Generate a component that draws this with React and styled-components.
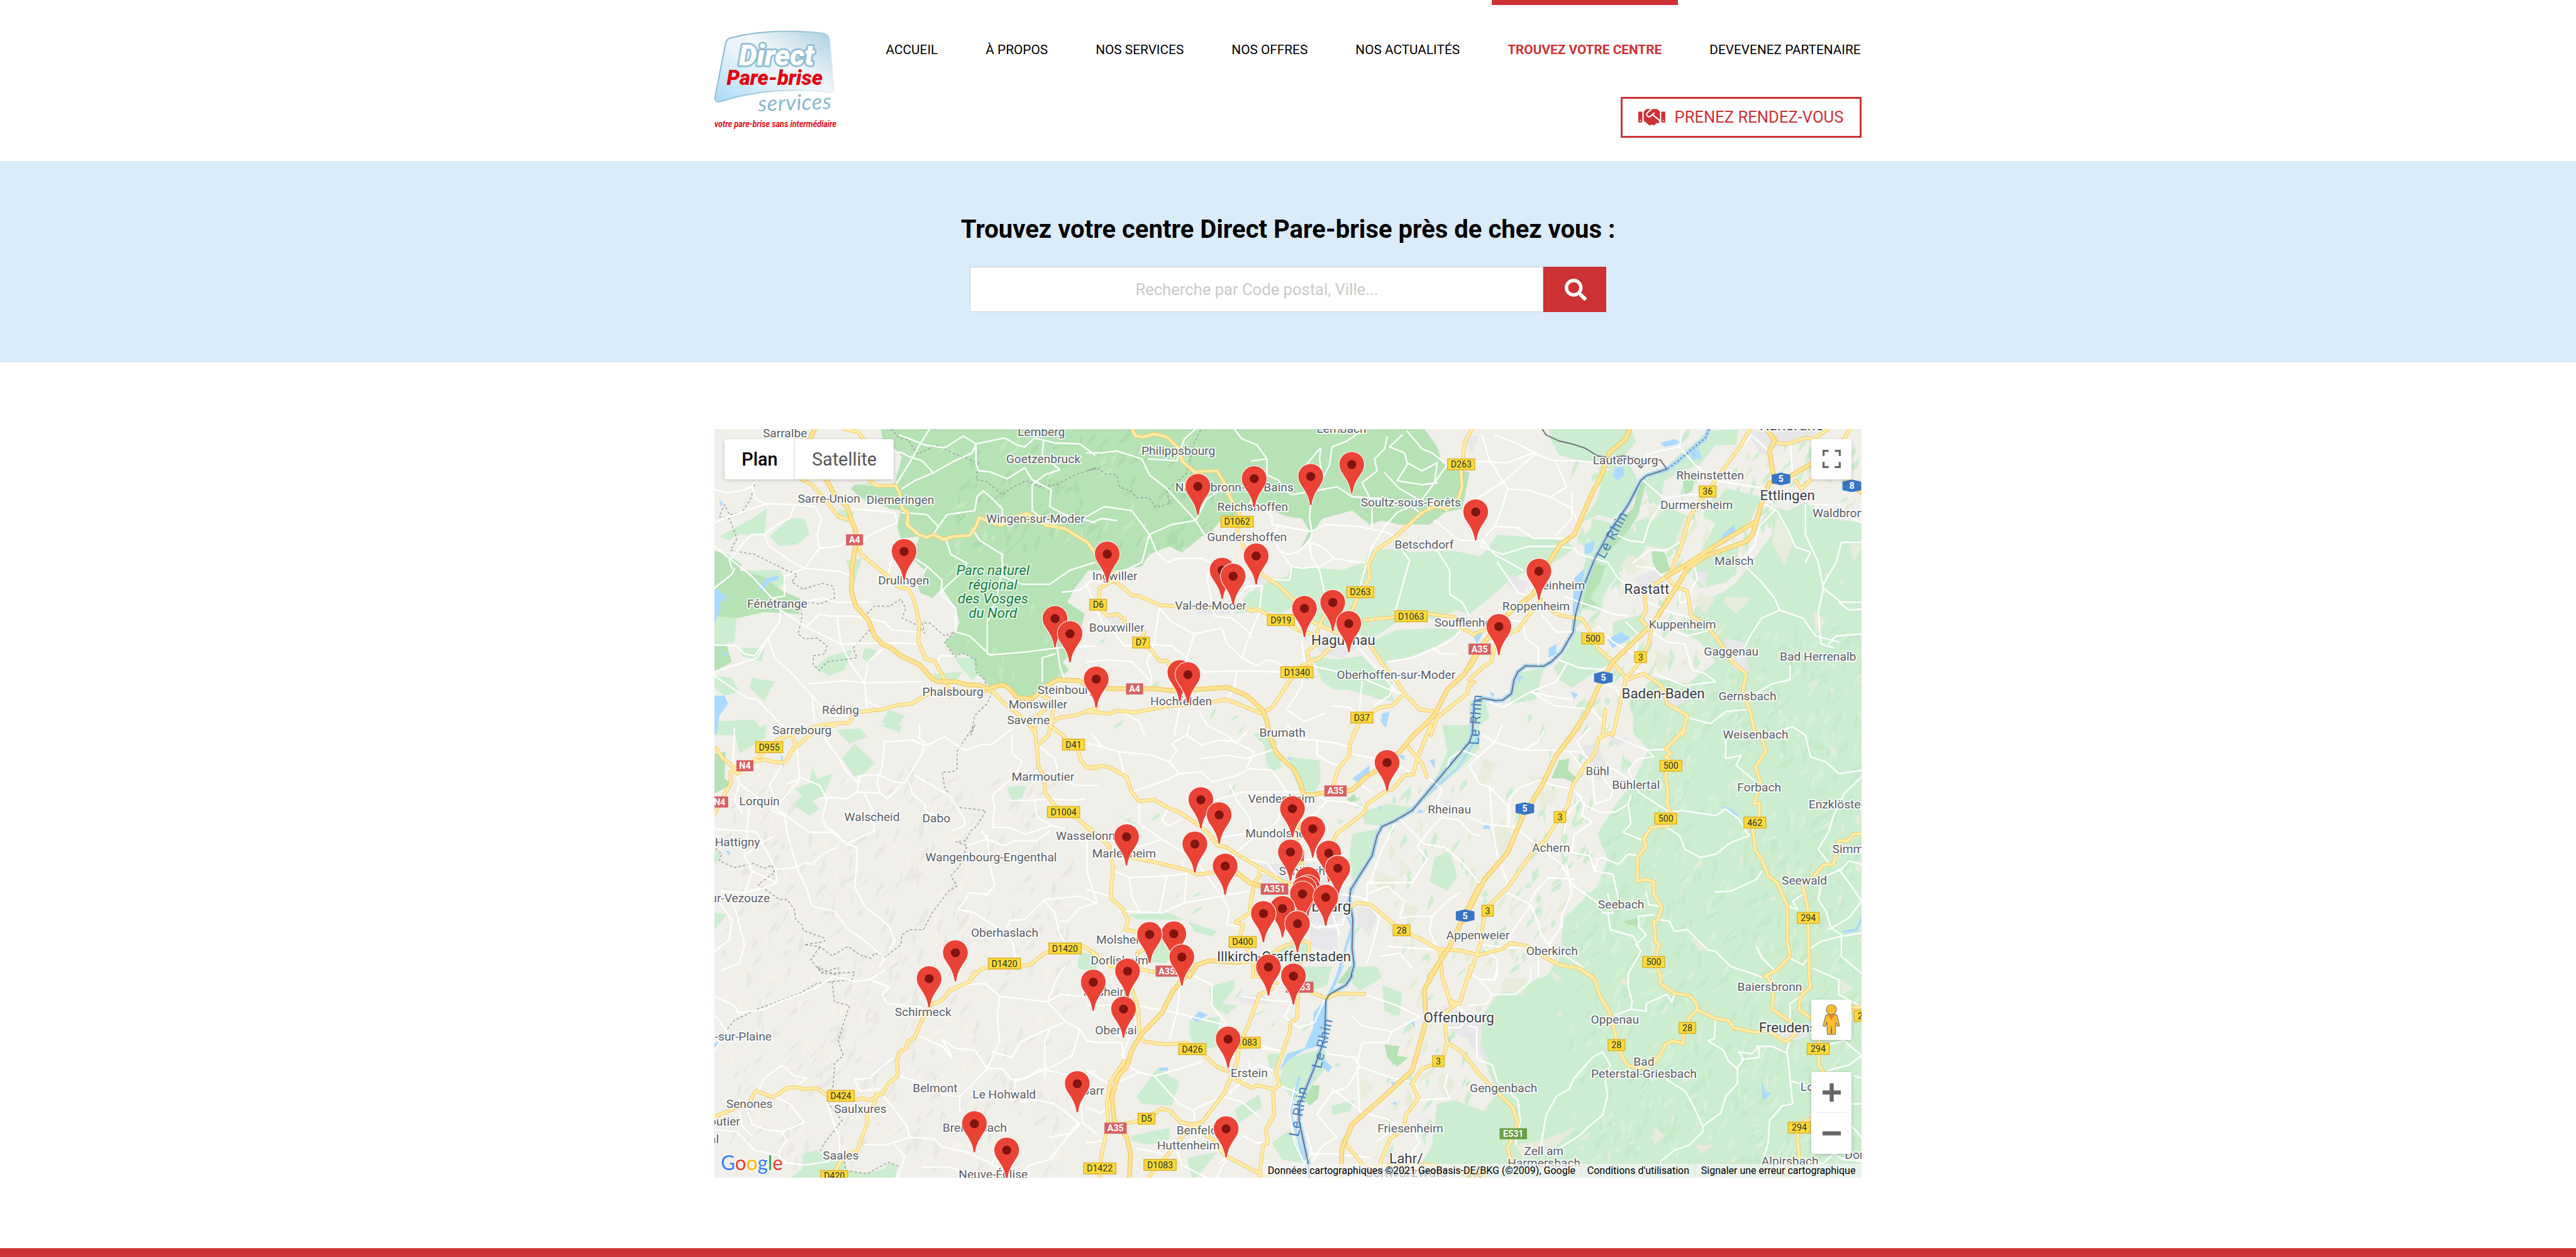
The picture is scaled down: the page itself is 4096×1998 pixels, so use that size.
import React from "react";
import styled, { createGlobalStyle, css } from "styled-components";
import { FaHandshake, FaSearch } from "react-icons/fa";

const RED = "#cc3234";

const GlobalStyle = createGlobalStyle`
  *, *::before, *::after { box-sizing: border-box; }
  body {
    margin: 0;
    background: #fff;
    font-family: Roboto, "Liberation Sans", sans-serif;
    color: #000;
  }
`;

/* ------------------------------ page shell ------------------------------ */

const Page = styled.div`
  width: 4096px;
  height: 1998px;
  overflow: hidden;
  display: flex;
  flex-direction: column;
`;

const Container = styled.div`
  width: 1824px;
  margin: 0 auto;
`;

const Header = styled.header`
  height: 256px;
  flex: none;
`;

const HeaderRow = styled(Container)`
  display: flex;
  justify-content: space-between;
  align-items: flex-start;
`;

const LogoSvg = styled.svg`
  display: block;
  width: 194px;
  height: 156px;
  margin-top: 49px;
  overflow: visible;
`;

const HeaderRight = styled.div`
  display: flex;
  flex-direction: column;
  align-items: flex-end;
`;

const Nav = styled.nav`
  display: flex;
  gap: 25.3px;
  margin-right: -24px;
`;

const NavItem = styled.a`
  height: 153.6px;
  padding: 58px 25.4px 0;
  border-top: 8px solid ${(p) => (p.$active ? RED : "transparent")};
  font-size: 20.8px;
  line-height: 26px;
  font-weight: ${(p) => (p.$active ? 700 : 400)};
  color: ${(p) => (p.$active ? RED : "#000")};
  white-space: nowrap;
`;

const RdvButton = styled.a`
  display: flex;
  align-items: center;
  gap: 14.4px;
  height: 65.6px;
  padding: 0 25.6px;
  border: 3.2px solid ${RED};
  color: ${RED};
  font-size: 25.6px;
  white-space: nowrap;
  svg { width: 42.9px; height: 34.3px; }
`;

const Hero = styled.section`
  height: 320px;
  flex: none;
  background: #daebf9;
  display: flex;
  flex-direction: column;
  align-items: center;
  padding-top: 83px;
`;

const HeroTitle = styled.h1`
  margin: 0 0 33px;
  font-size: 40px;
  line-height: 52px;
  height: 52px;
  font-weight: 700;
  white-space: nowrap;
`;

const SearchForm = styled.div`
  display: flex;
  height: 72px;
  width: 1011.2px;
`;

const SearchInput = styled.input`
  flex: 1;
  height: 72px;
  min-width: 0;
  border: 1.6px solid #ccc;
  background: #fff;
  text-align: center;
  font: 400 25.6px Roboto, "Liberation Sans", sans-serif;
  padding: 0;
  border-radius: 0;
  &::placeholder { color: #c9c9c9; opacity: 1; }
`;

const SearchButton = styled.button`
  width: 99.2px;
  height: 72px;
  border: 0;
  padding: 0;
  background: ${RED};
  color: #fff;
  display: flex;
  align-items: center;
  justify-content: center;
  svg { width: 35px; height: 35px; margin-left: 2px; }
`;

const MapFrame = styled.div`
  position: relative;
  width: 1824px;
  height: 1190.4px;
  flex: none;
  margin: 105.6px auto 0;
  overflow: hidden;
  background: #f0efea;
`;

const FooterBar = styled.footer`
  margin-top: auto;
  height: 14px;
  flex: none;
  background: ${RED};
`;

/* ----------------------------- map overlays ----------------------------- */

const MapSvg = styled.svg`
  display: block;
  width: 1824px;
  height: 1190.4px;
`;

const controlSurface = css`
  background: #fff;
  border-radius: 3.2px;
  box-shadow: 0 1.6px 6.4px -1.6px rgba(0, 0, 0, 0.3);
`;

const MapTypes = styled.div`
  ${controlSurface}
  position: absolute;
  left: 16px;
  top: 16px;
  height: 64px;
  display: flex;
`;

const MapType = styled.div`
  width: ${(p) => p.$width}px;
  display: flex;
  align-items: center;
  justify-content: center;
  padding-top: 1px;
  font-size: 28.8px;
  font-weight: ${(p) => (p.$active ? 500 : 400)};
  color: ${(p) => (p.$active ? "#000" : "#565656")};
  & + & { box-shadow: -2px 0 3px -1px rgba(0, 0, 0, 0.16); }
`;

const FullscreenButton = styled.div`
  ${controlSurface}
  position: absolute;
  right: 16px;
  top: 16px;
  width: 64px;
  height: 64px;
  display: grid;
  place-items: center;
`;

const ControlColumn = styled.div`
  position: absolute;
  right: 16px;
  bottom: 38.4px;
  display: flex;
  flex-direction: column;
  gap: 51.2px;
`;

const ControlBox = styled.div`
  ${controlSurface}
  width: 64px;
  height: ${(p) => p.$height}px;
  display: flex;
  flex-direction: column;
  align-items: center;
  justify-content: center;
`;

const ZoomCell = styled.div`
  width: 48px;
  flex: 1;
  display: grid;
  place-items: center;
  & + & { border-top: 1.6px solid #e6e6e6; }
`;

const GoogleLogo = styled.svg`
  position: absolute;
  left: 8px;
  bottom: 0;
  width: 110px;
  height: 46px;
`;

const Credits = styled.div`
  position: absolute;
  right: 0;
  bottom: 0;
  display: flex;
  gap: 1.6px;
  height: 22.4px;
`;

const Credit = styled.span`
  display: flex;
  align-items: center;
  padding: 0 ${(p) => p.$end || 8.6}px 0 8.6px;
  font-size: 16px;
  background: rgba(245, 245, 245, 0.72);
  white-space: nowrap;
`;

const Place = styled.text`
  font-family: Roboto, "Liberation Sans", sans-serif;
  font-size: ${(p) => p.$size}px;
  fill: ${(p) => p.$color};
  text-anchor: middle;
  paint-order: stroke;
  stroke: ${(p) => p.$halo};
  stroke-width: 5px;
  stroke-linejoin: round;
  ${(p) => p.$italic && "font-style: italic;"}
  ${(p) => p.$spacing && `letter-spacing: ${p.$spacing}px;`}
`;

const ShieldText = styled.text`
  font-family: Roboto, "Liberation Sans", sans-serif;
  font-size: 17.8px;
  text-anchor: middle;
  fill: ${(p) => (p.$light ? "#fff" : "#29302f")};
  font-weight: ${(p) => (p.$light ? 700 : 400)};
`;

/* ------------------------------- map data ------------------------------- */

/* Each sheet has its own origin and scale; all geometry is given per sheet. */
const SHEETS = {
  A: [1400, 840, 2.0103, 2.529],
  B: [2160, 840, 2.0103, 2.529],
  C: [2920, 840, 1.96, 2.529],
  D: [1400, 1440, 2.0103, 3],
  E: [2160, 1440, 2.0103, 3],
  F: [2920, 1440, 1.96, 3],
  J: [1400, 1920, 2.0103, 2.7128],
  K: [2160, 1920, 2.0103, 2.7128],
  L: [2920, 1920, 1.96, 2.7128],
};

const at = (sheet, u, v) => {
  const [x, y, sx, sy] = SHEETS[sheet];
  return [x + u / sx, y + v / sy];
};

const points = (str) => {
  let sheet = "A";
  const out = [];
  str.trim().split(/\s+/).forEach((t) => {
    if (SHEETS[t]) sheet = t;
    else {
      const [u, v] = t.split(",").map(Number);
      out.push(at(sheet, u, v));
    }
  });
  return out;
};

const line = (str) => "M" + points(str).map((p) => p.map((n) => n.toFixed(1)).join(" ")).join("L");
const area = (str) => line(str) + "Z";
const join = (list, fn) => list.map(fn).join("");

const VOSGES = [
  "A 705,30 712,80 760,130 790,170 760,300 690,320 600,310 585,330 620,370 670,390 740,430 785,440 770,520 785,580 860,570 830,680 880,740 850,790 860,850 910,880 950,830 1000,920 1020,1000 1005,1050 960,1100 1000,1170 1030,1155 1075,1180 1090,1250 1140,1325 1190,1310 1215,1330 1250,1390 1310,1390 1360,1330 1420,1290 1455,1240 1430,1200 1480,1150 1440,1080 1500,1050 1520,960 1450,900 1480,830 1540,730 B 0,740 130,740 220,720 250,660 330,620 380,650 460,570 500,540 530,500 620,450 660,380 720,430 800,470 860,480 890,540 850,640 900,560 940,480 1060,440 1130,510 1180,490 1250,510 1370,510 1430,450 1500,430 1530,250 1420,200 1400,120 1350,30",
  "A 40,640 90,660 150,710 140,740 230,770 320,850 380,880 380,960 240,950 130,980 40,970",
  "A 40,1120 90,1120 110,1200 40,1250",
  "D 40,170 85,160 80,320 110,350 40,410",
  "C 490,700 530,720 510,800 470,880 500,910 440,930 450,850",
  "C 590,480 640,430 660,300 690,280 660,460 610,560 540,650 500,660 560,540",
  "C 710,640 760,650 785,740 740,760 715,700",
  "C 830,270 880,260 870,340 840,360",
  "F 350,210 390,200 385,270 415,310 410,345 365,315 320,320",
  "F 600,1170 655,1150 660,1200 620,1190",
  "K 1190,420 1250,430 1240,480 1285,490 1240,540 1200,490",
  "K 900,640 930,640 925,710 890,750 865,710",
  "K 1000,90 1050,0 1070,0 1050,90",
  "E 1040,440 1070,410 1080,450 1050,460",
];

const GREEN = [
  "B 640,860 730,790 800,770 820,720 930,730 1020,740 1110,700 1130,640 1260,630 1290,650 1460,640 1568,670 C 60,650 110,560 200,570 380,590 410,630 330,700 200,760 150,800 60,900 0,960 B 1480,940 1400,980 1240,1000 1130,1090 1070,1050 1000,1060 900,1010 850,900 780,960 690,940 590,960",
  "B 900,1170 1000,1190 1100,1170 1190,1290 1240,1310 1130,1370 1040,1340 990,1340 940,1300",
  "B 1130,1100 1240,1040 1400,1030 1500,1040 1400,1120 1280,1180 1190,1210",
  "B 1130,1270 1200,1300 1230,1400 1140,1380",
  "C 310,30 630,30 650,90 560,240 500,200 430,190 350,160 320,90",
  "C 520,250 620,200 660,290 620,400 560,480 500,460 440,500 500,380",
  "C 480,480 620,520 700,600 650,700 600,720 540,830 500,940 440,940 420,1020 440,780",
  "C 690,270 770,235 860,120 930,40 1050,30 1040,110 960,110 900,210 830,240 760,290 740,420 700,380 680,320",
  "C 1100,360 1140,370 1080,540 960,620 900,640 960,510 920,470 1000,330",
  "C 640,500 780,430 860,470 820,640 700,620 660,560",
  "C 880,690 960,640 1050,620 1040,760 1000,800 900,830 870,780",
  "C 560,1000 680,960 700,1040 620,1080 640,1120 560,1080",
  "C 410,1040 470,1060 520,1160 560,1200 480,1260 400,1330 350,1290 330,1230 390,1120",
  "C 180,1260 290,1230 260,1390 160,1410",
  "C 0,1400 60,1390 80,1480 20,1540 0,1568",
  "C 1180,420 1240,440 1310,400 1400,480 1529,500 1529,1568 F 1529,0 1529,1500 L 1529,0 1529,1138 230,1138 K 1330,1138 1330,1080 1380,960 1400,740 1470,720 L 60,780 110,680 40,440 60,250 110,150 300,50 F 350,1400 370,1150 500,960 540,800 500,650 560,500 640,330 700,150 640,50 C 640,1480 620,1400 720,1280 850,1310 960,1200 900,1100 820,1040 900,900 990,850 1040,800 1090,720 1180,560",
  "A 340,480 400,480 420,560 370,610 300,620 260,570",
  "A 190,480 250,430 240,560 130,560 100,590 60,570",
  "A 600,310 680,300 650,400 610,360",
  "A 540,430 600,450 570,500 530,480",
  "A 565,690 630,680 600,800 580,740",
  "A 40,760 180,740 300,740 330,800 250,860 120,850 40,830",
  "A 40,970 130,960 120,1100 40,1120",
  "A 40,1270 110,1280 140,1350 80,1370 40,1330",
  "A 140,1130 240,1130 230,1200 150,1170",
  "A 190,1280 280,1300 240,1400 180,1330",
  "A 500,1170 590,1140 560,1240 500,1270 440,1230",
  "A 640,1130 690,1140 660,1210 630,1180",
  "A 735,1440 800,1470 760,1545 710,1500",
  "A 910,1260 1030,1250 1000,1310 940,1300",
  "A 1000,1180 1075,1180 1100,1260 1070,1290 1020,1220",
  "A 40,1500 200,1490 240,1568 40,1568",
  "D 120,40 250,0 240,80 140,170",
  "D 430,250 450,320 510,290 480,420 430,450 460,500 420,540 360,480 390,420 360,380 420,350",
  "D 550,200 600,110 680,225 640,290 600,305",
  "D 525,30 620,20 650,70 580,110",
  "D 700,0 790,0 780,45",
  "D 1210,370 1290,360 1270,430 1230,455",
  "D 40,1120 90,1130 40,1220",
  "D 40,740 70,780 40,830",
  "E 660,50 720,50 760,100 780,250 740,280 720,230 710,120",
  "E 810,190 930,210 935,330 910,400 850,390 820,280",
  "E 1420,0 1568,0 1568,140 1500,250 1400,380 1350,450 1290,520 1400,300 1440,160",
  "E 1060,650 1160,620 1140,780 1090,880 1060,930 1050,780",
  "E 1000,560 1030,570 1010,590",
  "E 1100,520 1200,470 1300,490 1230,570 1180,600 1110,590",
  "E 1390,790 1450,750 1480,900 1440,990 1370,930",
  "E 130,540 220,600 170,580",
  "E 165,1130 330,1120 420,1180 520,1230 500,1260 430,1230 400,1160 200,1160",
  "E 290,1260 360,1300 320,1420 200,1410 250,1360",
  "E 830,1280 880,1290 890,1400 850,1430 720,1400",
  "D 1500,1350 1568,1380 1568,1470 1490,1450",
  "K 490,110 590,70 590,120 540,200 600,210 560,260 500,220",
  "K 410,290 530,270 520,430 440,460 410,370",
  "K 280,550 370,620 340,750 220,740 200,700",
  "K 180,910 330,870 330,930 250,960 180,940",
  "K 590,770 690,690 700,760 610,840",
  "K 720,470 780,470 760,560 730,540",
  "K 790,500 950,440 960,540 900,640 870,680 850,760 770,620",
  "K 860,0 980,0 960,100 900,130 870,90",
  "K 740,950 810,880 860,1000 870,1060 780,1040",
  "K 1180,100 1260,140 1250,270 1190,240",
  "K 1070,0 1160,0 1180,60 1090,130 1060,90",
  "K 980,750 1070,720 1050,780 980,800",
  "J 395,1010 450,990 500,1050 560,1050 570,1100 640,1115 720,1090 735,1060 775,1075 760,1138 345,1138 390,1090",
  "K 400,1030 520,1000 440,1138 420,1138",
];

const BEIGE = [
  "C 840,470 900,500 830,620 800,600", "C 700,420 760,400 740,470 700,500", "C 1200,460 1260,600 1230,720 1180,600",
  "C 900,850 960,880 920,960 880,900", "C 1000,870 1100,880 1040,960 990,900", "C 720,1140 790,1180 740,1260",
  "C 1340,940 1390,1000 1350,1060", "C 1480,600 1529,620 1500,700", "C 620,660 700,700 640,760 590,720",
  "F 280,400 350,380 330,460 270,500", "F 60,200 110,230 60,370 30,330", "F 230,300 310,320 250,350",
  "F 130,560 180,700 120,780 80,650", "F 900,780 910,830 870,870", "F 1400,120 1435,140 1420,180",
  "F 1500,850 1529,830 1520,880", "F 860,1260 930,1330 900,1350", "F 1120,1320 1180,1450 1130,1370",
  "E 1160,870 1240,920 1210,1000 1150,950", "E 1260,1060 1330,1090 1290,1200", "E 1250,800 1290,850 1260,900",
  "K 1090,600 1150,640 1100,720", "K 1420,560 1470,620 1440,720 1400,640", "K 1180,800 1230,820 1200,900",
  "L 140,60 230,60 210,160 120,130", "L 320,20 370,70 330,70", "L 580,100 600,60 620,90", "L 720,860 760,910 720,970", "L 1440,60 1500,120 1450,150",
  "L 180,960 300,930 420,860 330,980 210,1040", "L 880,960 960,960 900,1010",
];

const URBAN = [
  "C 1080,50 1180,30 1360,40 1300,100 1200,120 1140,160", "C 640,780 720,740 780,780 740,850 660,820", "C 870,760 930,740 920,830",
  "C 990,1080 1070,1100 1090,1250 1030,1240", "C 730,1340 860,1380 790,1440 740,1380", "C 850,960 910,1000 880,1050",
  "F 430,130 500,110 550,300 500,330 460,240", "F 540,60 620,80 580,130", "E 870,820 1000,860 1050,1100 980,1200 900,1180 850,1030 700,1020 700,830",
  "E 890,1190 1000,1220 1000,1350 900,1320", "E 1080,1090 1170,1100 1130,1260 1080,1180", "E 1420,450 1460,440 1440,490",
  "B 1080,1130 1020,1180 930,1150 900,1100 960,1060 1080,1080", "B 380,910 640,900 560,960 450,960", "B 640,780 720,770 700,860", "B 70,970 140,980 120,1040",
  "K 600,160 700,150 740,200 620,200", "K 1420,210 1530,260 1568,400 1500,380 1440,330", "L 0,290 50,290 40,400 80,520 0,420", "L 1170,350 1250,320 1330,370 1260,400",
  "B 1500,70 1568,60 1540,150", "C 150,760 230,800 210,860 150,820",
];

const WATER = [
  "A 40,830 60,840 90,880 60,900 65,940 40,1010", "A 215,830 250,780 300,765 295,785 260,800 230,845", "A 40,1370 80,1370 95,1410 60,1470 50,1560 40,1568",
  "A 60,390 75,400 65,420", "A 75,1155 95,1155 80,1175", "D 85,750 103,750 100,780", "D 305,180 312,180 318,245 310,248",
  "J 40,415 58,405 50,440 40,448", "C 570,220 600,225 605,260 580,290 560,270", "C 860,140 895,130 905,180 870,185",
  "C 745,100 800,80 825,100 800,110 760,120", "C 450,610 490,590 480,650 450,660", "C 410,780 450,730 430,880 400,1010",
  "C 540,1090 590,1050 630,1080 590,1110 560,1130", "C 310,1130 340,1110 340,1160 310,1180", "C 980,570 1030,510 1040,550 1000,590",
  "C 190,1270 210,1270 190,1310", "C 80,1350 100,1360 90,1380", "C 395,1350 425,1360 410,1390", "C 10,1050 60,1040 30,1110",
  "B 1180,1460 1210,1450 1195,1530 1175,1500", "E 1060,320 1130,240 1130,290 1080,340", "E 1370,210 1390,200 1390,260", "E 1240,180 1270,180 1270,210",
  "E 800,195 815,190 815,220", "E 1330,500 1350,520 1320,525", "E 1165,480 1180,490 1175,510",
  "K 905,250 950,180 950,330 920,430 870,450 810,500 770,560 800,470 870,440 905,330", "K 940,490 980,540 965,570 935,530", "K 1215,620 1250,625 1220,640",
  "K 420,280 450,240 485,260 440,300", "K 288,545 325,545 322,562 290,562", "K 1290,290 1310,300 1310,330", "K 1220,730 1240,730 1230,750",
  "F 980,490 1000,488 1030,510 1050,540 1030,550 1015,515", "F 55,600 80,590 80,620 55,620", "L 1138,610 1155,680 1180,678 1160,705 1145,722", "K 1440,370 1455,390 1450,420",
];

const MOTORWAYS = [
  "A 440,30 415,100 485,280 520,360 570,420 585,480 605,540 605,610 590,720 588,850 605,920 655,990 680,1070 710,1110 745,1130 785,1170 860,1215 910,1285 935,1300 1005,1300 1050,1315 1100,1318 1130,1335 1190,1315 1215,1330 1250,1380 1310,1385 1370,1320 1410,1290 1500,1295 B 0,1320 100,1335 270,1335 340,1345 430,1340 560,1328 640,1370 705,1445 720,1500 E 722,0 735,80 760,170 830,270 858,360 865,415 910,415 960,400 1055,390 1090,350 1110,315 1160,270 1250,160 1300,70 1350,0 B 1390,1465 1440,1340 1510,1260 1568,1130 C 0,1230 60,1100 150,960 250,860 310,700 355,610 410,560 450,440 480,350 520,250 545,150 610,80 625,30",
  "C 1340,200 1240,275 1170,300 1140,400 1105,560 1080,595 920,670 850,730 810,820 720,1000 690,1040 560,1200 510,1310 460,1450 400,1568 F 430,0 340,180 280,370 210,540 150,760 60,920 0,1100 E 1568,960 1510,1130 1450,1320 1370,1500 K 1400,0 1350,120 1355,300 1300,560 1180,710 1060,850 1020,980 1015,1138",
  "C 1110,500 980,600 860,700 770,770",
  "E 610,1415 490,1405 440,1430 410,1500 K 410,30 345,130 300,250 215,370 180,450 160,540 125,590 100,700 110,830 160,920 175,1010 170,1138",
  "E 600,880 650,940 700,960", "E 865,415 845,560 835,700 870,900", "C 1165,40 1190,90 1170,140 1185,260", "C 1470,290 1529,350",
];

const MAINROADS = [
  "A 385,280 430,310 485,390 535,470 590,490 625,660 670,705 735,770 770,820 815,835 835,880 858,1000 855,1100 885,1185 920,1195 965,1300 990,1370",
  "A 560,30 615,45 640,90 660,290 690,315 765,315 780,350 790,430 815,450 810,510 855,560 890,575 915,560 955,585 995,570 1060,565 1085,520 1098,475 1130,490 1185,515 1230,480 1290,455 1370,515 1440,530 1530,600 1560,650 B 30,650 110,760 110,790",
  "B 110,790 50,830 50,930 85,970 120,960 150,985 152,1010", "B 230,1050 220,1090 255,1135 290,1195 320,1195 340,1240 350,1330",
  "B 110,790 180,865 210,870 290,915 400,925 640,930 660,945 680,935 720,960 790,1000 850,1045 900,1060",
  "B 180,30 195,65 225,70 270,55 320,70 370,130 380,190 430,245 520,240 545,290 575,380 610,460 600,540 630,630 700,760 770,820 850,920 905,1000 990,1050 1040,1070 1130,1110 1180,1210 1240,1300 1270,1360 1330,1440 1390,1450",
  "B 1540,30 1510,100 1495,250 1500,320 1480,400 1390,420 1340,450 1230,575 1155,640 1125,710 1130,780 1090,860 1060,940 1060,990",
  "B 950,960 920,1050 920,1110 880,1150 895,1220 820,1280 740,1430 705,1455", "B 1110,990 1230,975 1370,960 1470,975 1500,1030 1550,1065 C 20,1060 60,1040", "B 990,1110 930,1180 860,1220", "B 1390,420 1440,430 1480,400",
  "B 0,1450 90,1460 120,1445 190,1455 310,1425 450,1410 560,1390 600,1410 700,1460", "B 1270,1360 1220,1420 1170,1430 1090,1500 1065,1568 E 1085,0 1050,120 1050,180 1005,260 985,360",
  "C 20,1300 0,1320 B 1530,1310 1520,1360 1400,1480 1375,1568 E 1375,0 1320,200 1305,295 1270,300 1220,385 1200,390 1120,470 1110,520 1050,590 1000,645 985,690",
  "C 0,1290 60,1220 85,1200 110,1080 190,1040 230,970 280,890", "E 1280,125 1340,230 1360,310",
  "D 290,90 350,50 A 480,1515 580,1505 600,1455 720,1437 770,1418 830,1410 880,1370 940,1345 1150,1345 1190,1400 1240,1450 1290,1500 1325,1568 D 1320,0 1328,130 1335,250 1360,310 1360,400 1400,480 1440,520 1490,560 1568,650 E 0,610 90,720 105,850 95,1030 140,1090 165,1160 155,1220 230,1240",
  "D 45,135 75,200 125,260 105,280 105,350 70,440 40,530", "D 520,0 430,50 350,150 325,220 290,225 240,205 190,220 130,290 120,260", "D 190,220 310,80 350,50 365,130",
  "A 1380,1510 1420,1480 1480,1470 1568,1430", "A 1400,1400 1375,1568 D 1360,80 1328,130", "A 1310,1490 1400,1400 1350,1370",
  "D 1380,0 1430,60 1490,140 1505,210 1525,250 1568,258 E 0,255 65,245 95,255 160,310 180,400 210,455 270,445 320,490 375,525 450,600 490,650 520,715 560,730 600,770 690,850 780,930 850,970",
  "E 180,790 250,810 390,860 440,890 510,880 600,890", "E 690,860 690,900 670,940 655,1060 650,1120 595,1175 625,1195 605,1290 640,1330 665,1400 665,1500 K 680,50 760,90",
  "D 1568,1370 1510,1315 1440,1320 1360,1360 1300,1430 1200,1440 1110,1450 1075,1500 J 1080,30 1060,80 1020,105 980,130 950,180 905,205 865,300 840,385 815,400 805,440 780,460 770,500 772,590 735,630 710,690 685,690 680,740 650,790 650,850 640,880 610,1000 590,1000 545,1050 525,1100",
  "J 40,810 110,770 180,730 205,670 275,705 330,655 375,650 395,662 450,655 490,695 600,718 630,710 660,720 690,700",
  "E 0,1330 50,1390 100,1440 160,1440 260,1470 400,1480", "E 240,1330 200,1360 210,1440",
  "K 150,510 95,620 80,730 85,840 70,950 55,1040 50,1138", "K 180,120 205,220 210,370", "K 210,370 230,405 320,420 400,410 480,490 520,540 565,565",
  "K 580,600 660,655 680,640 745,660 770,640 755,570 790,430 810,360 815,300 840,280 845,120", "K 245,1138 320,1020 420,850 460,840 550,680 600,520 610,420 645,320 690,150 740,120",
  "K 140,850 230,825 300,765 335,780 375,840 420,850 500,930 555,1020 690,1115 740,1138", "K 745,660 748,800 715,880 725,950 705,960 690,1138",
  "E 850,1280 890,1300 885,1370 850,1420 845,1500 K 845,120", "E 820,1300 760,1340 740,1370 720,1400 610,1415", "K 900,140 960,170 1000,145 1110,147",
  "E 1060,1080 1080,1060 1130,1068 1170,1115 1220,1180 1280,1240 1340,1280 1400,1335 1490,1345 1568,1370 F 40,1370 130,1335 160,1300 220,1315 290,1380 350,1430 430,1450 480,1500 L 430,12 490,70 510,160 545,240 565,340 575,400 595,480 615,530 660,550 720,520 750,460 765,420 790,400 835,415 835,370 850,330 855,280 890,230",
  "F 745,1480 L 745,90 800,145 860,155 885,200 890,235 960,280 1010,290 1030,330 1115,355 1160,345 1235,405 1275,360",
  "C 1095,30 1060,110 930,340 860,470 820,640 780,760 720,815", "C 685,850 685,900 690,940 670,990 710,1040 700,1110 665,1200 610,1285 590,1400 560,1568 F 545,50 505,80 490,170 450,240 400,370 385,480 340,580 300,680 250,750 150,970 60,1100 45,1300 0,1500",
  "E 1410,1340 1420,1500 K 1450,180 1480,200 1430,250 1430,300 1440,410 1500,460 1568,580 L 90,650 170,760 190,840 165,930 150,980 165,1050", "K 1535,0 1490,200 1450,200",
  "K 1440,410 1420,510 1340,550 1300,630 1325,710 1275,800 1265,880 1210,930 1175,1050 1170,1090", "K 1025,940 1110,1080 1300,1060 1380,1070 L 60,1138",
  "C 770,770 800,820 850,845 865,970 910,1000 970,1090 1025,1200 1080,1260 1065,1350 1095,1450 1110,1540 F 1145,90 1155,160 1115,250 1135,340 1110,470 1130,465 1130,550 1105,620 1115,750 1140,800 1165,900 1200,940 1240,1080 1240,1290 1250,1380 1200,1460 1150,1500 L 1165,60 1185,130 1180,230 1250,295 1270,330",
  "C 1195,75 1195,100 1240,105 1310,75 1340,80", "C 1340,80 1400,30", "C 1460,80 1485,30",
  "C 320,940 350,965 440,985 465,1030 500,1130 560,1200 615,1290 680,1260 750,1320 770,1410 850,1470 830,1568 F 840,20 800,90 765,140 785,170 765,190 785,210 765,300 775,410 770,460 785,520 780,600 710,610 680,680 690,720 655,790 655,930 690,920 720,935 720,1010 750,1085 735,1160 720,1170 725,1290 740,1310 725,1400 745,1500",
  "F 1529,650 1500,650 1475,690 1440,690 1420,830 1380,835 1330,920 1300,960 1320,1100 1325,1500 L 1330,110 1290,160 1285,230 1333,280", "L 1362,390 1362,530 1380,570", "L 1333,820 1290,845 1280,920 1285,1030 1240,1060 1235,1138",
  "C 530,1440 520,1568 F 505,80 545,50", "C 1270,290 1295,330 1360,250", "L 1490,220 1529,215", "L 1490,240 1529,240",
];

const MINORROADS = [
  "A 900,30 860,110 820,200 765,310", "A 740,140 790,150 820,170 870,190 915,250 840,290 790,330", "A 780,60 880,110 960,125 1035,65 1085,105 1070,150 1000,190 915,250", "A 1085,105 1085,200 1095,240 1140,245 1210,280 1280,225 1310,285 1385,335 1380,420 1440,460 1560,500",
  "A 1085,105 1200,75 1250,110 1280,120 1320,75 1400,100 1500,105 1560,160", "A 1355,90 1350,160 1420,235 1360,260 1310,310 1310,440 1370,500 1440,530", "A 790,450 890,460 935,520 915,560", "A 935,520 970,460 1080,440 1090,370 1115,340 1150,380 1190,430 1190,490",
  "A 965,585 985,660 1050,705 1020,760 960,830 945,860 1005,930 1005,1045", "A 1070,530 1100,590 1190,660 1190,730 1170,870 1130,1000 1130,1160", "A 1005,1050 1060,1070 1140,1165 1290,1150 1410,1130 1560,1120", "A 1410,1130 1420,1220 1440,1290", "A 1400,1160 1350,1180 1350,1300",
  "A 840,680 890,720 950,790 945,860", "A 890,720 870,770 820,830", "A 1560,700 1460,740 1380,810 1270,810 1190,770", "A 1430,850 1500,840 1560,780",
  "A 40,620 110,690 190,770 270,880 305,940 400,1020 545,1110 780,1105 860,1110", "A 305,940 300,1000 255,1080 280,1180 350,1260 430,1370 440,1500", "A 255,1080 210,1180 40,1250", "A 40,1115 130,1120 160,1160 200,1170 255,1080", "A 40,830 110,760 120,730",
  "A 270,880 320,870 320,770 400,730 540,745 590,770", "A 400,730 340,690 260,620 240,560 190,560 150,610 100,690 110,730", "A 240,560 290,510 340,480 360,410 250,405 190,430 100,470 40,500", "A 360,410 440,420 470,480 450,560 460,630 400,730", "A 460,630 530,620 600,590", "A 40,335 90,350 150,340 190,320 205,290",
  "A 190,320 205,380 250,410", "A 210,290 190,220", "A 420,1310 560,1295 640,1305 870,1300", "A 640,1305 655,1200 710,1140", "A 530,970 545,1110 590,1220 640,1305 650,1430", "A 410,1020 460,960 500,970 600,970 650,980", "A 400,900 470,880 530,900 660,900", "A 590,430 680,440 760,450 770,500 700,540 650,570 620,620",
  "A 40,1270 110,1330 170,1380 210,1390 280,1480 340,1560", "A 640,980 720,1000 750,1040 850,1050", "A 730,770 770,600", "A 1000,1170 940,1170 930,1230", "A 655,1400 700,1430", "A 430,1370 500,1470 540,1470 600,1470",
  "B 0,150 60,150 120,140 220,180 250,260 320,330 370,400 435,490 340,510 250,560 180,440 70,420 0,470", "B 250,560 220,700 170,730 120,760", "B 435,490 480,380 530,340 560,345", "B 435,30 390,80 360,190 245,180", "B 435,490 470,560", "B 250,560 280,650 320,700 370,680 460,680",
  "B 590,30 620,80 680,110 720,180 720,260 770,290 780,330 820,360 960,330 1000,320 1060,370 1190,380 1290,410 1340,460", "B 720,180 660,190", "B 1110,30 1040,90 980,120 970,210 930,310", "B 935,130 930,180 940,260 895,400 890,480 900,550 890,600 900,680 930,740 985,1050", "B 930,130 870,220 850,280",
  "B 1200,70 1190,130 1150,180 1160,240 1100,300 1140,400 1140,520", "B 1260,60 1210,120 1270,150 1280,200 1340,240 1400,200 1390,300 1330,400 1240,450 1190,520 1140,620", "B 1280,210 1240,290 1340,310 1400,300", "B 1280,40 1340,130 1380,150 1440,210 1390,300", "B 1190,250 1250,330 1320,380 1440,440",
  "B 660,380 740,470 740,510 900,545 950,510 1090,520 1200,550 1230,570", "B 885,600 840,650 800,660 770,640 740,560 770,510", "B 770,640 820,720 860,730 930,720 990,680 940,620 885,600", "B 990,680 1080,700 1110,700", "B 820,720 810,790 730,785", "B 460,680 500,700 480,780 500,900", "B 600,880 640,820 700,820 690,950 640,1100 620,1180",
  "B 500,900 510,970 580,980 640,1040 660,1080", "B 290,930 340,1000 430,1060 540,1030 560,1110 620,1180 680,1220 720,1190 760,1200 820,1270", "B 290,930 270,1100 240,1200 260,1280 250,1335", "B 0,810 60,1000 100,1040 150,1120 230,1110 340,1120 400,1180 470,1250 600,1245 780,1250", "B 430,1060 400,1180 400,1290", "B 600,1245 590,1330 560,1390",
  "B 0,1200 80,1190 180,1200 250,1290", "B 860,1100 870,1200 860,1320 800,1440 870,1500 950,1460", "B 900,1220 1080,1270 1190,1330 1260,1360", "B 1080,1120 1150,1220 1230,1340", "B 1200,1200 1300,1180 1380,1140 1460,1090 1500,1030", "B 1380,1130 1420,1160 1480,1160", "B 1260,640 1290,690 1230,960", "B 1400,640 1450,740 1450,860 1500,900 1530,970", "B 1390,490 1490,590 1568,590",
  "B 1140,620 1100,780 1080,900", "B 150,1460 210,1500 230,1568", "B 370,1430 350,1568", "B 450,1450 480,1520 560,1568", "B 980,1420 1050,1430 1100,1480", "B 1100,1300 1090,1440", "B 1180,1230 1230,1300 1210,1370 1150,1420", "B 20,500 60,480 120,490",
  "C 50,60 80,190 150,330 240,340 330,380 400,430 430,520", "C 0,190 150,200 250,150 330,190 420,190 520,200", "C 100,60 180,100 260,150 140,290 90,330 20,390", "C 150,330 130,420 100,520 50,590 100,660 210,740", "C 100,520 190,525 250,580 400,580", "C 50,590 45,620 130,660 230,620 340,620 410,630 430,660 540,700 580,780 640,830", "C 340,200 380,320 320,370", "C 400,350 400,480 340,560",
  "C 500,930 560,960 620,970", "C 370,870 430,900 500,930", "C 280,960 340,1050 400,1050", "C 210,1000 220,1080 270,1130 270,1220", "C 160,990 210,1000", "C 650,720 720,730 760,780", "C 640,700 700,640 770,640 830,590 870,490", "C 540,540 620,590 680,600 700,510 760,380 800,370", "C 680,290 760,380 850,360 920,360",
  "C 830,30 820,120 740,140 690,160", "C 820,120 880,210 960,290 1060,310 1160,330", "C 960,290 1010,200 1100,60", "C 1100,60 1150,120 1180,160", "C 1250,90 1260,250", "C 1140,400 1200,440 1250,560 1270,620 1330,650 1310,700", "C 1190,440 1130,520 1110,620 1060,700 1140,800 1190,880 1210,940 1140,980 1100,1060 1050,1180",
  "C 1210,940 1300,980 1350,1070 1440,1100", "C 1310,410 1310,560 1360,700 1380,830 1360,950 1370,1110 1420,1130", "C 1380,830 1450,900 1529,900", "C 1380,810 1430,700 1450,600 1529,600", "C 1440,900 1480,940 1529,935", "C 1340,410 1440,410 1490,480 1529,500", "C 870,690 890,780 840,900 820,900 830,700",
  "C 700,900 780,950 870,980", "C 730,1010 850,1070 940,1040", "C 710,1050 770,1100 840,1110 870,1240 920,1260 960,1300 900,1310 840,1320 720,1260", "C 610,1000 660,1060 640,1240 690,1260", "C 500,1020 560,1100 640,1160", "C 350,1190 430,1230 540,1240", "C 380,1210 340,1300 240,1350 130,1430 80,1400", "C 510,1310 570,1330 600,1400", "C 400,1390 300,1370 240,1350 330,1420 480,1440 540,1530",
  "C 850,1480 940,1510 1000,1450 1080,1440", "C 1250,1220 1250,1290 1180,1310 1090,1380", "C 1529,1060 1430,1070 1400,1110", "C 110,700 190,850 230,870",
  "D 120,20 115,210 140,350 210,430 300,510 420,640 510,640 570,710 610,730 610,830 600,960 640,1080 740,1200 760,1290 740,1330", "D 310,240 260,360 280,430 270,510 320,540 330,640 370,850 410,980 430,1080 520,1110 570,1210 660,1310 720,1390 700,1440", "D 370,130 380,310 460,360 490,440 470,560 490,610 540,660",
  "D 480,80 530,180 570,280 610,340 630,300 700,300 760,340 800,345 870,170 880,120 830,90 720,100 710,250 690,330 700,400 730,440 780,370", "D 460,440 500,430 570,440 610,400 700,405", "D 640,410 670,500 680,630 580,700", "D 620,300 610,400", "D 840,300 920,370 980,420 1040,560 1040,600 990,630", "D 820,350 830,410 880,470 890,520 930,540",
  "D 860,0 860,80 890,120 960,70 1040,150 1100,120 1150,115 1230,20", "D 330,350 380,320 300,470", "D 140,350 120,450 150,520", "D 180,480 170,640 160,780 190,870 290,940 285,860 210,640 150,630 40,620", "D 160,780 230,700 270,670", "D 190,880 160,1000 60,990", "D 160,1000 240,970 290,940", "D 290,860 370,850 400,820 430,830 470,770 530,730",
  "D 100,1000 130,1130 160,1310 140,1420 70,1460", "D 60,1060 110,1160 100,1280 40,1350", "D 1230,60 1230,170 1270,220 1240,300 1150,420 1160,490 1150,610 1220,610 1280,650 1390,600 1440,620", "D 1220,450 1290,450 1380,440 1480,450 1520,440", "D 1340,130 1400,200 1420,320 1480,360 1568,360", "D 1320,450 1330,550 1390,600",
  "D 1110,630 1130,680 1160,700 1200,720 1240,690 1330,690 1380,630", "D 1130,660 1140,830 1160,960 1130,1010 1060,1000 1015,1100 1080,1120 1160,1200 1230,1290 1250,1430", "D 1050,720 1130,680", "D 1015,1100 1060,1110", "D 1568,1060 1500,1020 1360,1040 1280,1160 1220,1165 1200,1260", "D 1360,1050 1400,1120 1420,1250 1440,1290", "D 1420,1170 1450,1170 1500,1090 1568,1060", "D 1530,660 1530,880 1568,1050",
  "J 40,160 120,210 135,250 240,230 290,195 380,150 440,120 520,50 600,80 660,70 720,20", "J 660,70 740,110 710,150 730,200 870,220", "J 850,370 950,430 990,490 950,390 1000,440 1080,450 1130,550 1060,650 1020,700 1020,780", "J 1130,550 1190,550 1230,610 1290,600 1340,550 1440,580 1500,560", "J 1130,550 1180,400 1170,280 1180,160 1370,190 1420,150 1510,160", "J 1180,160 1120,90 1020,100",
  "J 1370,190 1440,290 1500,340 1530,400 1568,410", "J 1440,300 1350,350 1260,410 1230,490 1150,460", "J 1500,340 1470,480 1390,540 1240,620", "J 710,690 760,770 810,860 820,920 730,960 640,960", "J 820,920 920,930 950,970 1050,1000 1130,1050 1200,1110", "J 780,590 850,620 910,640 950,690 1020,700", "J 750,495 710,540 660,600 600,610 620,670 700,660",
  "J 210,690 240,600 310,530 360,590 410,600 370,640", "J 170,760 190,850 250,880 310,890 400,840 340,740 280,700", "J 40,880 130,890 200,990 300,1020 330,1060", "J 310,890 330,940 300,990 300,1060 360,1060", "J 490,730 520,860 540,920 540,1010", "J 330,1060 400,1070 500,1050", "J 140,780 150,860 190,910", "J 760,960 800,1020 790,1070 770,1138", "J 40,260 90,350 40,450",
  "J 1200,700 1240,720 1240,610", "J 1260,730 1330,720 1400,740 1450,790 1500,850 1460,900 1380,920", "J 1490,850 1420,970 1380,1040 1300,1070 1250,1138", "J 1150,1060 1180,960", "J 870,1080 980,1080 1100,1138", "J 1568,900 1510,840 1500,600 1560,560", "J 1370,190 1410,60 1440,0", "J 1360,600 1360,400 1380,340",
  "E 0,110 60,130 130,160 260,180 330,220 370,290 460,280 500,340 600,300 650,260 740,270 800,400", "E 20,50 60,130", "E 130,170 150,300", "E 410,0 400,60 340,110 360,150 330,220", "E 400,60 460,120 530,90 600,100 640,40", "E 460,200 560,180 640,200 740,150 770,150", "E 180,400 330,320 370,290", "E 210,460 210,590 300,680 430,800 540,1020 650,990",
  "E 330,480 300,570 330,600 380,560", "E 560,60 590,100 670,160 640,250", "E 570,350 600,450 650,550 660,640 540,670", "E 440,550 510,450 620,400 760,400 850,400", "E 540,1020 390,1060 300,1120 130,1110", "E 110,870 170,910 320,900 430,880", "E 320,900 300,1050 290,1120", "E 170,910 180,1020 210,1110", "E 300,680 200,730", "E 0,980 90,1020",
  "E 540,1020 570,1100 560,1190 610,1200", "E 380,820 400,880 390,1060", "E 570,790 660,680 760,580 800,420", "E 720,50 770,150", "E 800,0 840,80 920,90 920,180 980,230 1010,240", "E 850,90 920,90", "E 1050,170 1150,200 1200,200 1290,280", "E 910,90 1000,110 1050,130", "E 890,400 960,450 1040,460 1100,490", "E 960,450 920,520 890,550", "E 1090,350 1140,400",
  "E 1360,310 1420,380 1400,450 1420,550 1380,610 1320,720 1360,800 1300,940 1120,940 1120,1060", "E 1420,550 1490,570 1540,650 1568,660", "E 1250,560 1350,710 1430,730 1500,820 1568,940", "E 1230,590 1180,740 1150,860 1130,950", "E 1130,1000 1200,960 1270,1050 1250,1150 1300,1140 1380,1140", "E 1120,1060 1170,1150 1150,1270 1120,1420", "E 1380,1140 1440,1050 1490,1000", "E 1380,1140 1370,1230 1400,1330", "E 1200,1320 1300,1330 1400,1340", "E 1170,1380 1250,1360 1300,1450",
  "E 880,880 1010,830 1060,860", "E 900,700 930,780 1000,830", "E 980,1000 1100,1030 1130,1060", "E 930,1200 1020,1190 1050,1060", "E 880,1180 920,1210 1000,1200", "E 640,800 720,820 760,900 700,880", "E 750,940 860,1000 980,1120 1010,1250", "E 780,820 860,800 960,810", "E 1568,190 1500,150 1450,200 1440,260",
  "F 50,60 100,100 0,240 40,350 80,370 90,600 110,780 150,940", "F 100,100 200,150 310,150 430,160 470,200", "F 130,0 100,100 210,150 270,100 290,40", "F 0,550 60,590 180,610 250,700 360,830 400,950 500,1060 520,1120 560,1120 540,1010", "F 80,370 150,480 160,590", "F 270,330 330,360 400,380 440,430 380,540 370,650", "F 270,330 190,380 160,430 150,600", "F 400,370 450,470 440,540 480,580 410,650 400,760 470,780 490,870 560,890 580,1030",
  "F 470,20 420,100 460,200 480,310 490,470 550,440 560,390 520,310", "F 540,50 630,110 690,150 760,145", "F 700,160 720,190 660,200 620,270 660,400 740,480 780,520 830,510 960,540 1000,500 1050,560 1090,660 1020,700 960,770 900,790 840,740 820,660 770,610", "F 440,470 510,520 570,520 620,470 630,420", "F 620,470 630,590 600,640 650,670 680,690", "F 390,160 440,250 560,260 620,320",
  "F 520,790 580,830 620,770 660,780", "F 490,870 500,800 520,790", "F 1000,80 1000,200 1060,180 1040,240 1110,330", "F 1200,40 1260,10 1310,60 1330,190 1390,220 1440,290 1529,270", "F 1529,310 1460,410 1420,540 1400,640 1360,740 1400,820", "F 1140,870 1120,920 1020,990 960,995", "F 1370,960 1360,1040 1390,1110 1410,1210 1450,1250 1450,1380 1529,1480", "F 1390,900 1450,860 1480,810 1529,830",
  "F 1440,860 1480,940 1529,1050 1480,1150 1400,1220", "F 1330,1330 1370,1290 1450,1260 1529,1240", "F 1240,1080 1280,1100 1260,1050 1300,1010", "F 740,1160 780,1170 800,1230 850,1220 930,1340 960,1350 1020,1440 1120,1490 L 1140,60", "F 1120,1320 1140,1390 1190,1460", "F 1250,1390 1300,1430 1320,1390", "F 690,1000 700,1070 740,1080", "F 720,1130 660,1140 660,1200 690,1250 650,1310 670,1350 620,1480 L 620,110 635,190 630,230 570,260",
  "F 540,1120 550,1220 640,1260 660,1320", "F 380,840 400,1000 360,1140 360,1200 310,1310 400,1400 440,1440", "F 150,1000 240,1070 270,1180 280,1250 310,1310", "F 240,1050 260,990 310,910 410,920", "F 240,1070 160,1250 160,1320", "F 50,1310 160,1330 220,1320", "F 60,1330 110,1400 110,1500", "F 270,1380 270,1500",
  "L 240,0 240,80 180,150 90,150 40,70 0,30", "L 90,150 70,200 0,210", "L 40,70 100,70 110,0", "L 0,320 30,330 30,500 90,530 110,620 190,720 200,830 180,960", "L 280,960 300,800 340,700 390,660 410,600 480,490 520,460 550,530 530,620 540,690 520,800 460,870 430,910 350,980 270,1020", "L 630,230 690,240 690,200 770,150 790,190 800,150", "L 960,290 955,390 930,400 990,450 1010,510 1045,550 1045,630 1000,700 980,790 910,860 870,740 840,670 770,610",
  "L 910,860 910,890 860,960 800,990 745,1050 745,1080", "L 1045,545 1070,500 1050,460 1100,470 1130,430 1130,490 1060,500", "L 1120,430 1180,430 1235,465 1250,390", "L 1240,465 1250,600 1260,740 1220,750 1170,830 1165,950 1150,1020", "L 1260,620 1310,640", "L 1250,295 1250,200 1290,160", "L 1340,10 1440,70 1440,150 1520,210", "L 1400,420 1460,400 1529,480 1480,530 1400,560", "L 1529,740 1490,740", "L 1490,860 1529,920", "L 1290,1040 1380,1060 1420,1010 1460,1040 1529,1050", "L 1500,590 1529,600",
  "K 380,0 370,130 360,250 160,200 60,210 0,210", "K 360,250 330,390", "K 360,250 540,310 640,400 780,460", "K 430,50 500,100 500,210 560,310", "K 210,260 140,480 170,540 210,570 270,590 370,740 430,780 430,850", "K 0,560 100,640 210,570", "K 270,590 400,540 460,510", "K 430,770 540,700 620,730 690,810", "K 640,560 690,530 740,560", "K 650,510 650,590 570,680",
  "K 620,910 680,950 720,950", "K 420,930 360,990 380,1070 480,1138", "K 530,1060 560,1030", "K 690,440 760,450", "K 850,330 910,300 950,180", "K 620,160 720,180 820,190 790,270 850,330", "K 770,640 860,690", "K 960,470 1070,490 1090,540 1040,650 980,680 920,800 1000,920 940,970 900,1050", "K 1090,540 1220,600 1290,620", "K 1080,540 1090,780 1110,790 1200,820 1240,860 1160,940", "K 980,660 1110,790",
  "K 1060,270 1100,320 1220,350 1330,270 1240,210 1110,150", "K 1220,350 1200,410 1100,410 1080,520", "K 1310,620 1330,720 1450,710 1430,650 1440,580", "K 1530,270 1490,330 1440,330", "K 1530,270 1440,170", "K 890,1010 990,1010 1130,1030", "K 1310,890 1330,950 1290,1020", "K 880,900 900,1000 870,1060 830,950 810,780 830,650", "K 0,400 60,410 140,410 150,500", "K 0,760 60,790 90,740", "K 0,950 70,940", "K 520,1138 540,1080 560,1040", "K 200,980 310,1010",
];

const DEPARTMENTS = [
  "A 745,30 780,75 815,85 850,155 930,112 990,150 1095,200 1085,285 1130,295 1190,360 1230,325 1285,290 1340,320 1410,310 1480,260 1565,225 B 0,240 50,230 70,255 120,260 130,320 180,345 200,375 250,375 275,425 330,405 320,340 400,250 430,100 455,35",
  "A 205,285 185,380 150,450 100,460 80,410 60,470 100,480 130,580 105,640 200,660 330,740 370,760 350,800 395,835 470,805 515,820 520,880 460,910 400,895 385,930 390,970 375,1060 400,1085 450,1080 490,1120 480,1160 435,1170 435,1215 460,1245 490,1200 610,1180 595,1130 660,1040 650,960 680,920 740,920 785,885 805,930 790,980 850,1015 880,1055 870,1005 900,1005 960,1070 1000,1050 960,1100 1000,1175 1030,1155 1085,1190 1085,1250 1120,1290 1130,1340 1150,1350 1130,1410 1080,1470 1065,1568 D 1080,0 1010,155 1010,260 990,280 950,280 960,370 985,430 1010,490 1125,510 1090,600 1065,630 1045,690 1005,695 1050,720 1020,840 985,900 1010,960 975,990 910,1120 875,1220 820,1220 790,1250 785,1310 720,1385 680,1360 665,1390 620,1370 575,1320 510,1375 460,1320 400,1310 480,1290 480,1270 395,1225 390,1190 365,1160 360,1100 330,1040 300,1040 215,950 280,880 270,835 240,855 195,825 120,850 60,810 70,770 45,735",
  "D 460,1325 425,1400 470,1480 535,1445 540,1500 J 450,0 480,40 600,30 590,70 450,90 380,145 300,185 210,230 120,290 90,340", "J 510,80 520,190 580,210 555,310 535,400 555,480 520,520 515,640 490,730 550,830 480,950 460,1000", "J 560,1050 565,1100 650,1115 735,1055 775,1075",
];

const RHINE_DASHED = "C 935,30 920,75 870,130 810,195 770,232";
const RHINE = "C 770,232 690,265 668,290 620,410 550,540 490,680 440,840 415,960 405,1050 360,1150 320,1200 290,1222 220,1220 190,1250 175,1290 165,1360 130,1393 105,1395 55,1383 20,1400 12,1568 F 10,60 E 1530,100 1300,510 1230,572 1180,605 1160,660 1140,780 1055,980 1050,1040 1063,1160 1060,1330 1068,1430 1055,1500 K 1060,50 1035,100 970,150 955,180 950,390 905,560 850,740 848,830 885,1060 890,1138";
const FRONTIER = "C 285,30 300,60 350,90 400,105 450,125 500,165 550,175 600,165 690,190 670,225 660,215 690,195 745,185 770,232";

/* name, sheet, centre x, baseline y, [size] */
const PLACES = [
  ["Sarralbe", "A", 322, 70], ["Lemberg", "A", 1346, 66], ["Goetzenbruck", "A", 1354, 201], ["Sarre-Union", "A", 498, 401], ["Diemeringen", "A", 783, 405],
  ["Wingen-sur-Moder", "A", 1323, 500], ["Drulingen", "A", 796, 811], ["Fénétrange", "A", 291, 929], ["Phalsbourg", "A", 993, 1370], ["Steinbourg", "A", 1447, 1360],
  ["Monswiller", "A", 1333, 1433], ["Saverne", "A", 1295, 1514], ["Réding", "A", 544, 1464], ["Sarrebourg", "D", 390, 54],
  ["Philippsbourg", "B", 366, 160], ["Lembach", "B", 1018, 48], ["Niederbronn-les-Bains", "B", 590, 342], ["Reichshoffen", "B", 663, 441], ["Gundershoffen", "B", 640, 592],
  ["Soultz-sous-Forêts", "B", 1295, 418], ["Betschdorf", "B", 1348, 632], ["Ingwiller", "B", 112, 788], ["Bouxwiller", "B", 120, 1048], ["Val-de-Moder", "B", 495, 938],
  ["Haguenau", "B", 1025, 1116, 28], ["Oberhoffen-sur-Moder", "B", 1236, 1284], ["Hochfelden", "B", 377, 1419], ["Brumath", "E", 782, 69],
  ["Soufflenheim", "C", 2, 1022], ["Lauterbourg", "C", 609, 208], ["Rheinstetten", "C", 939, 282], ["Durmersheim", "C", 886, 432], ["Ettlingen", "C", 1240, 387, 28],
  ["Karlsruhe", "C", 1256, 36, 30], ["Waldbronn", "C", 1450, 473], ["Malsch", "C", 1032, 713], ["Rastatt", "C", 692, 860, 28], ["Beinheim", "C", 354, 836], ["Roppenheim", "C", 261, 941],
  ["Kuppenheim", "C", 831, 1032], ["Gaggenau", "C", 1021, 1170], ["Bad Herrenalb", "C", 1359, 1193], ["Baden-Baden", "C", 756, 1382, 28], ["Gernsbach", "C", 1084, 1394],
  ["Weisenbach", "F", 1116, 81], ["Bühl", "F", 500, 300], ["Bühlertal", "F", 650, 382], ["Forbach", "F", 1130, 397], ["Enzklösterle", "F", 1450, 499], ["Achern", "F", 319, 757],
  ["Simmersfeld", "F", 1548, 763], ["Seewald", "F", 1306, 951], ["Seebach", "F", 592, 1092], ["Oberkirch", "F", 323, 1370], ["Appenweier", "F", 34, 1278],
  ["Lorquin", "D", 220, 478], ["Walscheid", "D", 670, 573], ["Dabo", "D", 927, 580], ["Marmoutier", "D", 1353, 334], ["Hattigny", "D", 132, 721], ["Wangenbourg-Engenthal", "D", 1146, 813],
  ["Cirey-sur-Vezouze", "D", 70, 1057], ["Oberhaslach", "D", 1200, 1261], ["Wasselonne", "E", 8, 685], ["Marlenheim", "E", 149, 790], ["Vendenheim", "E", 778, 464],
  ["Mundolsheim", "E", 780, 668], ["Schiltigheim", "E", 900, 896], ["Strasbourg", "E", 907, 1114, 30.5], ["Rheinau", "E", 1449, 529], ["Molsheim", "E", 144, 1305], ["Dorlisheim", "E", 131, 1428],
  ["Illkirch-Graffenstaden", "E", 788, 1408, 28],
  ["Schirmeck", "J", 874, 265], ["Celles-sur-Plaine", "J", 90, 400], ["Belmont", "J", 922, 677], ["Le Hohwald", "J", 1198, 711], ["Senones", "J", 180, 763], ["Saulxures", "J", 623, 788],
  ["Moyenmoutier", "J", -12, 856], ["Étival", "J", 0, 950], ["Breitenbach", "J", 1080, 892], ["Saales", "J", 545, 1041], ["Neuve-Église", "J", 1154, 1142], ["Barr", "K", 25, 691],
  ["Rosheim", "K", 80, 158], ["Obernai", "K", 117, 364], ["Erstein", "K", 649, 596], ["Benfeld", "K", 440, 905], ["Huttenheim", "K", 406, 986], ["Offenbourg", "L", -40, 300, 28],
  ["Friesenheim", "K", 1293, 893], ["Lahr/", "K", 1276, 1061, 28], ["Schwarzwald", "K", 1276, 1136, 28], ["Gengenbach", "L", 134, 677], ["Oppenau", "L", 568, 306], ["Bad", "L", 681, 533], ["Peterstal-Griesbach", "L", 681, 599],
  ["Baiersbronn", "L", 1171, 131], ["Freudenstadt", "L", 1290, 354, 28], ["Loßburg", "L", 1378, 670], ["Dornhan", "L", 1552, 1038], ["Zell am", "L", 291, 1016], ["Harmersbach", "L", 292, 1080], ["Alpirsbach", "L", 1250, 1070],
];

const PARK = [["Parc naturel", 1153, 765], ["régional", 1153, 836], ["des Vosges", 1153, 907], ["du Nord", 1153, 978]];

const RIVER_NAMES = [["Le Rhin", "C", 563, 565, -62], ["Le Rhin", "C", 32, 1490, -86], ["Le Rhin", "K", 948, 415, -77], ["Le Rhin", "K", 852, 782, -80]];

/* kind, text, sheet, centre x, centre y */
const SHIELDS = [
  ["d", "D263", "B", 1496, 208], ["d", "D1062", "B", 601, 496], ["d", "D263", "B", 1093, 850], ["d", "D6", "B", 46, 913], ["d", "D919", "B", 776, 990], ["d", "D1063", "B", 1296, 971],
  ["d", "D7", "B", 217, 1103], ["d", "D1340", "B", 840, 1252], ["d", "D37", "B", 1099, 1480], ["d", "D955", "D", 259, 132], ["d", "D41", "D", 1475, 117], ["d", "D1004", "D", 1435, 519],
  ["d", "D1420", "D", 1441, 1332], ["d", "D1420", "D", 1199, 1422], ["d", "D400", "E", 623, 1293], ["d", "D424", "J", 545, 697], ["d", "D420", "J", 519, 1129], ["d", "D1422", "K", 52, 1088],
  ["d", "D1083", "K", 293, 1069], ["d", "D5", "K", 239, 820], ["d", "D426", "K", 422, 445], ["d", "D1083", "K", 629, 410], ["d", "36", "C", 929, 344], ["d", "500", "C", 482, 1083], ["d", "3", "C", 668, 1176],
  ["d", "500", "F", 786, 243], ["d", "500", "F", 766, 558], ["d", "462", "F", 1113, 582], ["d", "3", "F", 354, 549], ["d", "3", "F", 72, 1107], ["d", "294", "F", 1321, 1150], ["d", "500", "F", 719, 1413],
  ["d", "28", "E", 1258, 1224], ["d", "3", "K", 1405, 510], ["d", "28", "L", 850, 331], ["d", "28", "L", 574, 423], ["d", "294", "L", 1360, 444], ["d", "294", "L", 1286, 868], ["d", "28", "L", 1533, 266], ["d", "415", "L", 20, 1135],
  ["a", "A4", "A", 600, 587], ["a", "A4", "B", 191, 1336], ["a", "A35", "C", 41, 1136], ["a", "N4", "D", 162, 243], ["a", "N4", "D", 61, 459], ["a", "A35", "E", 994, 393], ["a", "A351", "E", 750, 978],
  ["a", "A352", "E", 330, 1467], ["a", "A35", "K", 115, 871], ["a", "A353", "K", 851, 111], ["a", "A4", "E", 834, 778], ["e", "E531", "L", 172, 901],
  ["h", "5", "C", 1215, 281], ["h", "8", "C", 1491, 316], ["h", "5", "C", 523, 1280], ["h", "5", "F", 217, 498], ["h", "5", "E", 1512, 1137],
];

/* tip of every centre marker */
const PINS = [
  ["B", 1011, 36], ["A", 798, 790], ["A", 1401, 1127], ["A", 1461, 1203], ["B", 82, 803], ["B", 444, 463], ["B", 669, 424], ["B", 895, 413], ["B", 1059, 353], ["B", 541, 884], ["B", 585, 914], ["B", 677, 812],
  ["B", 870, 1076], ["B", 983, 1046], ["B", 1047, 1152], ["B", 372, 1399], ["B", 404, 1409], ["B", 38, 1431], ["B", 1554, 591], ["C", 272, 889], ["C", 116, 1167], ["J", 1003, 80], ["J", 898, 220],
  ["E", 1200, 395], ["E", 456, 617], ["E", 529, 707], ["E", 159, 838], ["E", 432, 881], ["E", 553, 1012], ["E", 822, 670], ["E", 903, 790], ["E", 814, 929], ["E", 967, 935], ["E", 1003, 1025], ["E", 883, 1092],
  ["E", 883, 1141], ["E", 869, 1150], ["E", 862, 1178], ["E", 955, 1198], ["E", 782, 1265], ["E", 706, 1295], ["E", 842, 1355], ["E", 251, 1420], ["E", 348, 1416], ["E", 380, 1554], ["E", 163, 1638], ["E", 26, 1704],
  ["E", 726, 1614], ["E", 826, 1668], ["K", 147, 384], ["K", 565, 546], ["K", 557, 1029], ["J", 1490, 786], ["J", 1079, 1002], ["J", 1208, 1144],
].map(([s, u, v]) => at(s, u, v)).sort((a, b) => a[1] - b[1]);

/* Relief shading: small angular slivers scattered with a fixed seed. */
const scatter = (seed, n, [x0, y0, x1, y1], size, tilt = 0.5) => {
  let s = seed;
  const rnd = () => ((s = (s * 16807) % 2147483647) / 2147483647);
  let d = "";
  for (let i = 0; i < n; i++) {
    const cx = x0 + rnd() * (x1 - x0);
    const cy = y0 + rnd() * (y1 - y0);
    const a = -Math.PI / 2 + tilt + (rnd() - 0.5) * 1.1;
    const l = size * (0.5 + rnd());
    const w = size * (0.12 + rnd() * 0.3);
    const c = Math.cos(a), t = Math.sin(a);
    const pts = [[-l, 0], [-l * 0.2, -w], [l, -w * rnd()], [l * 0.3, w]].map(([p, q]) => [cx + p * c - q * t, cy + p * t + q * c]);
    d += "M" + pts.map((p) => p.map((v) => v.toFixed(1)).join(" ")).join("L") + "Z";
  }
  return d;
};

const HEX = "M-18.5 -8.5L0 -12.5L18.5 -8.5V8.5L0 12.5L-18.5 8.5Z";

function Shield({ kind, label, x, y }) {
  const width = kind === "a" || kind === "e" ? 13 + label.length * 10.4 : 15 + label.length * 10.2;
  return (
    <g transform={`translate(${x} ${y})`}>
      {kind === "h" ? (
        <path d={HEX} fill="#3776c6" />
      ) : (
        <rect
          x={-width / 2 + (kind === "d" ? 1 : 0)}
          y={kind === "d" ? -10.8 : -11}
          width={width - (kind === "d" ? 2 : 0)}
          height={kind === "d" ? 21.6 : 22}
          fill={kind === "d" ? "#fddb38" : kind === "a" ? "#d66062" : "#6ba043"}
          stroke={kind === "d" ? "#e0b22f" : "none"}
          strokeWidth="2"
        />
      )}
      <ShieldText $light={kind !== "d"} y="6.4">{label}</ShieldText>
    </g>
  );
}

function Pin({ x, y }) {
  return (
    <g transform={`translate(${x - 27} ${y - 84}) scale(2)`}>
      <path
        d="M13.5 1C6.8 1 1.2 6.3 1.2 13.2C1.2 16.4 2.2 18.9 3.9 21.6C7 26.6 11.6 32 12.6 41.2Q12.8 42 13.5 42Q14.2 42 14.4 41.2C15.4 32 20 26.6 23.1 21.6C24.8 18.9 25.8 16.4 25.8 13.2C25.8 6.3 20.2 1 13.5 1Z"
        fill="#ea4335"
        stroke="#fff"
        strokeWidth="1.3"
        paintOrder="stroke"
      />
      <circle cx="13.5" cy="13.5" r="4.5" fill="#811411" />
    </g>
  );
}

function MapDrawing() {
  const motor = join(MOTORWAYS, line);
  const main = join(MAINROADS, line);
  return (
    <MapSvg viewBox="1420 852 2280 1488" preserveAspectRatio="none">
      <defs>
        <clipPath id="darkWood"><path d={area(VOSGES[0])} /></clipPath>
        <clipPath id="blackForest"><path d={area(GREEN[15])} /></clipPath>
      </defs>
      <rect x="1420" y="852" width="2280" height="1488" fill="#f0efea" />
      <path d={scatter(11, 330, [1440, 1540, 2130, 2330], 15)} fill="#e8e7e2" />
      <path d={scatter(29, 240, [1440, 1540, 2130, 2330], 14)} fill="#f5f1eb" />
      <path d={scatter(47, 34, [2180, 1100, 2720, 2330], 11, 0.9)} fill="#ccedd0" />
      <path d={scatter(53, 90, [2760, 1560, 3120, 2330], 15, 0.4)} fill="#e6ebd6" />
      <path d={scatter(59, 110, [2760, 1560, 3160, 2330], 14, 0.4)} fill="#ccedd0" />
      <path d={scatter(61, 90, [3130, 860, 3690, 1420], 15, 0.4)} fill="#e6ebd6" />
      <path d={scatter(67, 150, [3130, 860, 3690, 1420], 17, 0.4)} fill="#ccedd0" />
      <path d={scatter(71, 50, [3000, 1380, 3240, 1960], 15, 0.4)} fill="#ccedd0" />
      <path d={join(GREEN, area)} fill="#ccedd0" />
      <path d={join(VOSGES, area)} fill="#b6e2b6" />
      <g clipPath="url(#darkWood)">
        <path d={scatter(83, 90, [1900, 860, 2420, 1110], 16)} fill="#addbad" />
        <path d={scatter(89, 70, [1850, 870, 2380, 1400], 15)} fill="#c1e8bf" />
      </g>
      <g clipPath="url(#blackForest)">
        <path d={scatter(97, 420, [3120, 1250, 3700, 2340], 18)} fill="#c6e9c9" />
        <path d={scatter(101, 330, [3120, 1250, 3700, 2340], 15)} fill="#d5f1d5" />
        <path d={scatter(103, 90, [3090, 1100, 3700, 2340], 11)} fill="#e6ebd9" />
      </g>
      <path d={join(BEIGE, area)} fill="#e8ecda" />
      <path d={join(URBAN, area)} fill="#e7e7e9" />
      <path d={join(WATER, area)} fill="#aadaff" />
      <g fill="none" strokeLinejoin="round" strokeLinecap="round">
        <path d={line(RHINE)} stroke="#aadaff" strokeWidth="9" />
        <path d={line(RHINE_DASHED)} stroke="#aadaff" strokeWidth="9" />
        <path d={line("E 1568,60 1480,260 1340,440 1250,560")} stroke="#aadaff" strokeWidth="4" />
        <path d={line("E 1100,880 1070,960 1030,1100 1060,1200 1020,1400 1000,1500")} stroke="#aadaff" strokeWidth="5" />
        <path d={line("K 1020,0 980,120 950,200")} stroke="#aadaff" strokeWidth="6" />
        <path d={line("K 850,600 820,720 815,800 840,900 870,1050 890,1138")} stroke="#aadaff" strokeWidth="5" />
        <path d={line("F 1529,1150 1510,1220 1460,1232")} stroke="#aadaff" strokeWidth="5" />
        <path d={join(DEPARTMENTS, line)} stroke="#9a9c9c" strokeWidth="1.8" strokeDasharray="5 4" strokeLinecap="butt" />
        <path d={join(MINORROADS, line)} stroke="#fff" strokeWidth="3" />
        <path d={main} stroke="#f6cf6e" strokeWidth="7.6" />
        <path d={main} stroke="#ffeca6" strokeWidth="4.8" />
        <path d={motor} stroke="#f3c95c" strokeWidth="9.4" />
        <path d={motor} stroke="#fee393" strokeWidth="6.2" />
        <path d={line(RHINE)} stroke="#73777a" strokeWidth="2.6" />
        <path d={line(RHINE_DASHED)} stroke="#73777a" strokeWidth="2" strokeDasharray="4 4" strokeLinecap="butt" />
        <path d={line(FRONTIER)} stroke="#73777a" strokeWidth="2.6" />
      </g>
      {RIVER_NAMES.map(([t, s, u, v, r], i) => {
        const [x, y] = at(s, u, v);
        return (
          <Place key={i} transform={`translate(${x} ${y}) rotate(${r})`} y={6} $size={28} $color="#4a80c4" $halo="none" $spacing={1.4}>{t}</Place>
        );
      })}
      {PARK.map(([t, u, v]) => {
        const [x, y] = at("A", u, v);
        return <Place key={t} x={x} y={y} $size={28} $color="#188043" $halo="rgba(255,255,255,.6)" $italic>{t}</Place>;
      })}
      {PLACES.map(([t, s, u, v, size = 24]) => {
        const [x, y] = at(s, u, v);
        return <Place key={t} x={x} y={y} $size={size} $color={size > 24 ? "#3c4043" : "#5b5f66"} $halo="rgba(255,255,255,.82)">{t}</Place>;
      })}
      {SHIELDS.map(([k, t, s, u, v], i) => {
        const [x, y] = at(s, u, v);
        return <Shield key={i} kind={k} label={t} x={x} y={y} />;
      })}
      {PINS.map(([x, y], i) => <Pin key={i} x={x} y={y} />)}
    </MapSvg>
  );
}

function Logo() {
  return (
    <LogoSvg viewBox="0 0 240 193">
      <defs>
        <linearGradient id="glass" x1="0" y1="1" x2="1" y2="0.1">
          <stop offset="0" stopColor="#a9d9f7" />
          <stop offset="0.45" stopColor="#e9f3fb" />
          <stop offset="0.62" stopColor="#f0f6fa" />
          <stop offset="1" stopColor="#b0d2e2" />
        </linearGradient>
        <linearGradient id="rim" x1="0" y1="0" x2="1" y2="0.6">
          <stop offset="0" stopColor="#7db4ca" />
          <stop offset="0.6" stopColor="#9cc8da" />
          <stop offset="1" stopColor="#e6eff5" />
        </linearGradient>
      </defs>
      <path d="M32 14Q85 0 143 1Q182 1 215 5Q226 8 226 20L235 114Q235 122 226 121Q112 107 12 139Q1 141 1 131L22 24Q24 16 32 14Z" fill="url(#glass)" stroke="url(#rim)" strokeWidth="2.6" />
      <g fontFamily='"Liberation Sans Narrow", Roboto, sans-serif' fontStyle="italic">
        <text x="48" y="68" fontSize="57" fontWeight="900" textLength="148" lengthAdjust="spacingAndGlyphs" fill="#fff" stroke="#8fbfd3" strokeWidth="7" strokeLinejoin="round" paintOrder="stroke">Direct</text>
        <text x="24" y="107" fontSize="42" fontWeight="900" textLength="189" lengthAdjust="spacingAndGlyphs" fill="#e30613">Pare-brise</text>
        <text x="0" y="189" fontSize="18" fontWeight="700" textLength="240" lengthAdjust="spacingAndGlyphs" fill="#e01020">votre pare-brise sans intermédiaire</text>
      </g>
      <text x="86" y="156" fontFamily="Lato, sans-serif" fontWeight="400" fontStyle="italic" fontSize="43" textLength="144" lengthAdjust="spacing" fill="#86b9d0" transform="rotate(-2 158 150)">services</text>
    </LogoSvg>
  );
}

const NAV = ["ACCUEIL", "À PROPOS", "NOS SERVICES", "NOS OFFRES", "NOS ACTUALITÉS", "TROUVEZ VOTRE CENTRE", "DEVEVENEZ PARTENAIRE"];

export default function App() {
  return (
    <Page>
      <GlobalStyle />
      <Header>
        <HeaderRow>
          <Logo />
          <HeaderRight>
            <Nav>
              {NAV.map((n, i) => <NavItem key={n} $active={i === 5}>{n}</NavItem>)}
            </Nav>
            <RdvButton><FaHandshake />PRENEZ RENDEZ-VOUS</RdvButton>
          </HeaderRight>
        </HeaderRow>
      </Header>
      <Hero>
        <HeroTitle>Trouvez votre centre Direct Pare-brise près de chez vous :</HeroTitle>
        <SearchForm>
          <SearchInput placeholder="Recherche par Code postal, Ville..." />
          <SearchButton><FaSearch /></SearchButton>
        </SearchForm>
      </Hero>
      <MapFrame>
        <MapDrawing />
        <MapTypes>
          <MapType $active $width={112}>Plan</MapType>
          <MapType $width={157}>Satellite</MapType>
        </MapTypes>
        <FullscreenButton>
          <svg width="29" height="29" viewBox="0 0 18 18" fill="#666">
            <path d="M0 0v6h2V2h4V0H0zm16 0h-4v2h4v4h2V0h-2zm0 16h-4v2h6v-6h-2v4zM2 12H0v6h6v-2H2v-4z" />
          </svg>
        </FullscreenButton>
        <ControlColumn>
          <ControlBox $height={64}>
            <svg width="28" height="49" viewBox="0 0 34 61">
              <g stroke="#7a7468" strokeWidth="1.4" strokeLinejoin="round" fill="#fbbc2d">
                <path d="M9 21H25Q28 21 29 25L33.3 43L29.5 44.5L26 36L25 60H18L17 44L16 60H9L8 36L4.5 44.5L.7 43L5 25Q6 21 9 21Z" />
                <circle cx="17" cy="11" r="10" />
              </g>
              <path d="M10 21H24L17 31Z" fill="#e1832e" />
            </svg>
          </ControlBox>
          <ControlBox $height={129.6}>
            <ZoomCell><svg width="29" height="29" viewBox="0 0 18 18" fill="#666"><path d="M18 7h-7V0H7v7H0v4h7v7h4v-7h7z" /></svg></ZoomCell>
            <ZoomCell><svg width="29" height="29" viewBox="0 0 18 18" fill="#666"><path d="M0 7h18v4H0z" /></svg></ZoomCell>
          </ControlBox>
        </ControlColumn>
        <GoogleLogo viewBox="0 0 110 46">
          <text x="2" y="33.5" fontFamily="Lato, sans-serif" fontSize="33.5" fontWeight="500" textLength="99" lengthAdjust="spacingAndGlyphs" stroke="#fff" strokeWidth="2.4" paintOrder="stroke">
            <tspan fill="#4285f4">G</tspan><tspan fill="#ea4335">o</tspan><tspan fill="#fbbc05">o</tspan><tspan fill="#4285f4">g</tspan><tspan fill="#34a853">l</tspan><tspan fill="#ea4335">e</tspan>
          </text>
        </GoogleLogo>
        <Credits>
          <Credit>Données cartographiques ©2021 GeoBasis-DE/BKG (©2009), Google</Credit>
          <Credit>Conditions d'utilisation</Credit>
          <Credit $end={9.6}>Signaler une erreur cartographique</Credit>
        </Credits>
      </MapFrame>
      <FooterBar />
    </Page>
  );
}
